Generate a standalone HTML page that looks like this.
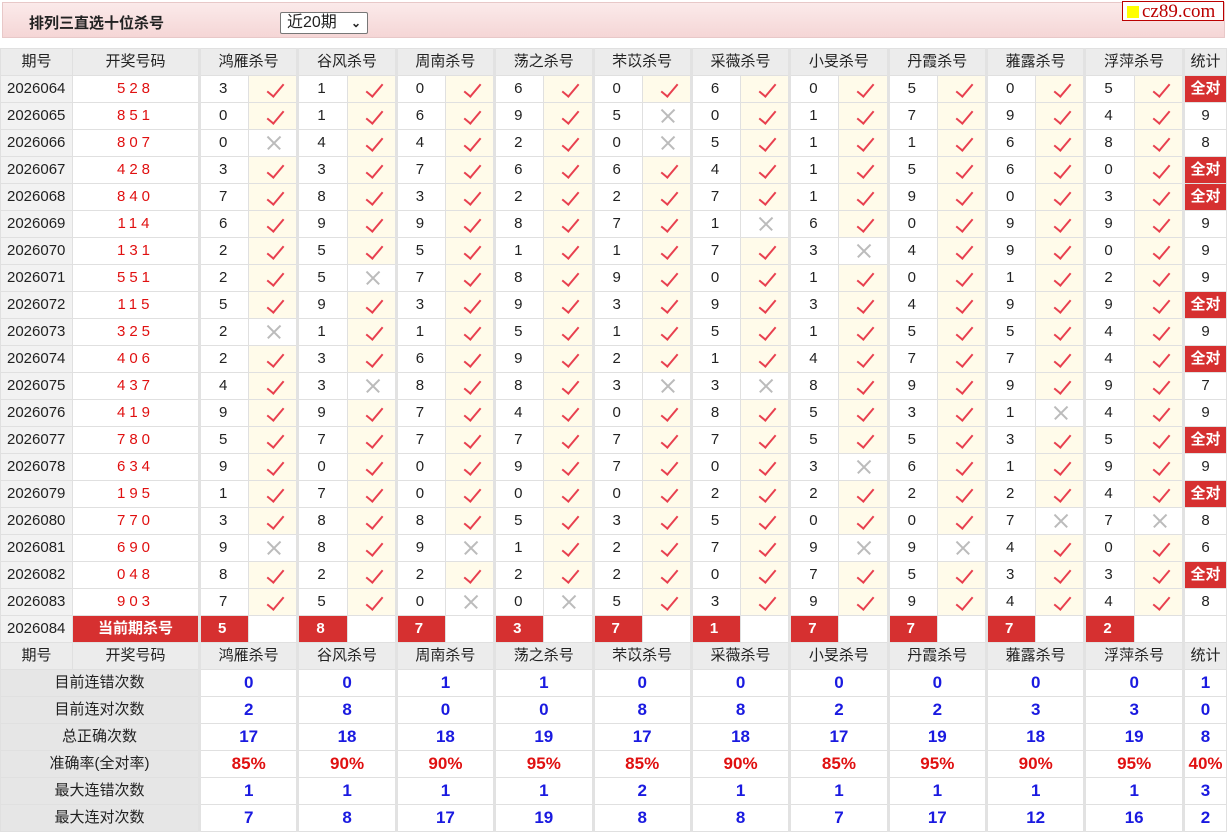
<!DOCTYPE html>
<html><head><meta charset="utf-8">
<style>
body{margin:0;background:#fff;font-family:"Liberation Sans","Noto Sans CJK SC",sans-serif;font-size:15px;color:#222}
.top{position:absolute;left:2px;top:2px;width:1223px;height:36px;background:linear-gradient(#fbeaea,#f5d6d6);border:1px solid #e8c8c8;box-sizing:border-box}
.title{position:absolute;left:26px;top:9px;font-size:15px;font-weight:bold;color:#222}
.sel{position:absolute;left:277px;top:9px;width:88px;height:22px;border:1px solid #777;background:#fff;box-sizing:border-box;font-size:16px;line-height:20px;padding-left:6px;border-radius:2px}
.sel b{position:absolute;right:6px;top:0;font-size:12px}
.logo{position:absolute;left:1122px;top:1px;width:102px;height:20px;border:1px solid #b00;background:#fff;font-family:"Liberation Serif",serif;color:#b00;font-size:19px;line-height:19px;box-sizing:border-box}
.logo i{display:inline-block;width:12px;height:12px;background:#ff0;margin:0 3px 0 4px;vertical-align:-1px}
table{position:absolute;left:0;top:48px;border-collapse:collapse;table-layout:fixed;width:1227px}
td{height:26px;line-height:24px;border:1px solid #e0e0e0;text-align:center;padding:0;white-space:nowrap;overflow:hidden;box-sizing:border-box}
tr{height:27px}
td.g{border-left:3px solid #e2e2e2}
tr.h td{background:#ececec}
td.q{background:#f2f2f2;text-align:left;padding-left:6px}
td.k{color:#e01010;letter-spacing:4px}
td.n{text-align:left;padding-left:18px}
td.y{background:#fffbea;font-size:0;position:relative}
td.y::after{content:"";position:absolute;left:22px;top:4px;width:7px;height:15px;border-right:2px solid #e8404f;border-bottom:2px solid #e8404f;transform:rotate(40deg)}
td.x{font-size:0;position:relative}
td.x::before,td.x::after{content:"";position:absolute;left:16px;top:12px;width:18px;height:1.5px;background:#bbb;transform:rotate(45deg)}
td.x::after{transform:rotate(-45deg)}
td.a{background:#d63030;color:#fff;font-weight:bold}
td.c{background:#d63030;color:#fff;font-weight:bold;text-align:left;padding-left:17px}
td.l{background:#e6e6e6}
td.v{color:#1a1ae0;font-weight:bold;font-size:17px}
td.r{color:#e01010;font-weight:bold;font-size:17px}
</style></head><body>
<div class="top"><div class="title">排列三直选十位杀号</div><div class="sel">近20期<b>&#8964;</b></div></div>
<div class="logo"><i></i>cz89.com</div>
<table>
<colgroup><col style="width:72px"><col style="width:127px"><col span="20"><col style="width:43px"></colgroup>
<tr class="h"><td>期号</td><td>开奖号码</td><td class="g" colspan="2">鸿雁杀号</td><td class="g" colspan="2">谷风杀号</td><td class="g" colspan="2">周南杀号</td><td class="g" colspan="2">荡之杀号</td><td class="g" colspan="2">芣苡杀号</td><td class="g" colspan="2">采薇杀号</td><td class="g" colspan="2">小旻杀号</td><td class="g" colspan="2">丹霞杀号</td><td class="g" colspan="2">蕥露杀号</td><td class="g" colspan="2">浮萍杀号</td><td class="g">统计</td></tr>
<tr><td class="q">2026064</td><td class="k">528</td><td class="g n">3</td><td class="y">✓</td><td class="g n">1</td><td class="y">✓</td><td class="g n">0</td><td class="y">✓</td><td class="g n">6</td><td class="y">✓</td><td class="g n">0</td><td class="y">✓</td><td class="g n">6</td><td class="y">✓</td><td class="g n">0</td><td class="y">✓</td><td class="g n">5</td><td class="y">✓</td><td class="g n">0</td><td class="y">✓</td><td class="g n">5</td><td class="y">✓</td><td class="g a">全对</td></tr>
<tr><td class="q">2026065</td><td class="k">851</td><td class="g n">0</td><td class="y">✓</td><td class="g n">1</td><td class="y">✓</td><td class="g n">6</td><td class="y">✓</td><td class="g n">9</td><td class="y">✓</td><td class="g n">5</td><td class="x">✕</td><td class="g n">0</td><td class="y">✓</td><td class="g n">1</td><td class="y">✓</td><td class="g n">7</td><td class="y">✓</td><td class="g n">9</td><td class="y">✓</td><td class="g n">4</td><td class="y">✓</td><td class="g">9</td></tr>
<tr><td class="q">2026066</td><td class="k">807</td><td class="g n">0</td><td class="x">✕</td><td class="g n">4</td><td class="y">✓</td><td class="g n">4</td><td class="y">✓</td><td class="g n">2</td><td class="y">✓</td><td class="g n">0</td><td class="x">✕</td><td class="g n">5</td><td class="y">✓</td><td class="g n">1</td><td class="y">✓</td><td class="g n">1</td><td class="y">✓</td><td class="g n">6</td><td class="y">✓</td><td class="g n">8</td><td class="y">✓</td><td class="g">8</td></tr>
<tr><td class="q">2026067</td><td class="k">428</td><td class="g n">3</td><td class="y">✓</td><td class="g n">3</td><td class="y">✓</td><td class="g n">7</td><td class="y">✓</td><td class="g n">6</td><td class="y">✓</td><td class="g n">6</td><td class="y">✓</td><td class="g n">4</td><td class="y">✓</td><td class="g n">1</td><td class="y">✓</td><td class="g n">5</td><td class="y">✓</td><td class="g n">6</td><td class="y">✓</td><td class="g n">0</td><td class="y">✓</td><td class="g a">全对</td></tr>
<tr><td class="q">2026068</td><td class="k">840</td><td class="g n">7</td><td class="y">✓</td><td class="g n">8</td><td class="y">✓</td><td class="g n">3</td><td class="y">✓</td><td class="g n">2</td><td class="y">✓</td><td class="g n">2</td><td class="y">✓</td><td class="g n">7</td><td class="y">✓</td><td class="g n">1</td><td class="y">✓</td><td class="g n">9</td><td class="y">✓</td><td class="g n">0</td><td class="y">✓</td><td class="g n">3</td><td class="y">✓</td><td class="g a">全对</td></tr>
<tr><td class="q">2026069</td><td class="k">114</td><td class="g n">6</td><td class="y">✓</td><td class="g n">9</td><td class="y">✓</td><td class="g n">9</td><td class="y">✓</td><td class="g n">8</td><td class="y">✓</td><td class="g n">7</td><td class="y">✓</td><td class="g n">1</td><td class="x">✕</td><td class="g n">6</td><td class="y">✓</td><td class="g n">0</td><td class="y">✓</td><td class="g n">9</td><td class="y">✓</td><td class="g n">9</td><td class="y">✓</td><td class="g">9</td></tr>
<tr><td class="q">2026070</td><td class="k">131</td><td class="g n">2</td><td class="y">✓</td><td class="g n">5</td><td class="y">✓</td><td class="g n">5</td><td class="y">✓</td><td class="g n">1</td><td class="y">✓</td><td class="g n">1</td><td class="y">✓</td><td class="g n">7</td><td class="y">✓</td><td class="g n">3</td><td class="x">✕</td><td class="g n">4</td><td class="y">✓</td><td class="g n">9</td><td class="y">✓</td><td class="g n">0</td><td class="y">✓</td><td class="g">9</td></tr>
<tr><td class="q">2026071</td><td class="k">551</td><td class="g n">2</td><td class="y">✓</td><td class="g n">5</td><td class="x">✕</td><td class="g n">7</td><td class="y">✓</td><td class="g n">8</td><td class="y">✓</td><td class="g n">9</td><td class="y">✓</td><td class="g n">0</td><td class="y">✓</td><td class="g n">1</td><td class="y">✓</td><td class="g n">0</td><td class="y">✓</td><td class="g n">1</td><td class="y">✓</td><td class="g n">2</td><td class="y">✓</td><td class="g">9</td></tr>
<tr><td class="q">2026072</td><td class="k">115</td><td class="g n">5</td><td class="y">✓</td><td class="g n">9</td><td class="y">✓</td><td class="g n">3</td><td class="y">✓</td><td class="g n">9</td><td class="y">✓</td><td class="g n">3</td><td class="y">✓</td><td class="g n">9</td><td class="y">✓</td><td class="g n">3</td><td class="y">✓</td><td class="g n">4</td><td class="y">✓</td><td class="g n">9</td><td class="y">✓</td><td class="g n">9</td><td class="y">✓</td><td class="g a">全对</td></tr>
<tr><td class="q">2026073</td><td class="k">325</td><td class="g n">2</td><td class="x">✕</td><td class="g n">1</td><td class="y">✓</td><td class="g n">1</td><td class="y">✓</td><td class="g n">5</td><td class="y">✓</td><td class="g n">1</td><td class="y">✓</td><td class="g n">5</td><td class="y">✓</td><td class="g n">1</td><td class="y">✓</td><td class="g n">5</td><td class="y">✓</td><td class="g n">5</td><td class="y">✓</td><td class="g n">4</td><td class="y">✓</td><td class="g">9</td></tr>
<tr><td class="q">2026074</td><td class="k">406</td><td class="g n">2</td><td class="y">✓</td><td class="g n">3</td><td class="y">✓</td><td class="g n">6</td><td class="y">✓</td><td class="g n">9</td><td class="y">✓</td><td class="g n">2</td><td class="y">✓</td><td class="g n">1</td><td class="y">✓</td><td class="g n">4</td><td class="y">✓</td><td class="g n">7</td><td class="y">✓</td><td class="g n">7</td><td class="y">✓</td><td class="g n">4</td><td class="y">✓</td><td class="g a">全对</td></tr>
<tr><td class="q">2026075</td><td class="k">437</td><td class="g n">4</td><td class="y">✓</td><td class="g n">3</td><td class="x">✕</td><td class="g n">8</td><td class="y">✓</td><td class="g n">8</td><td class="y">✓</td><td class="g n">3</td><td class="x">✕</td><td class="g n">3</td><td class="x">✕</td><td class="g n">8</td><td class="y">✓</td><td class="g n">9</td><td class="y">✓</td><td class="g n">9</td><td class="y">✓</td><td class="g n">9</td><td class="y">✓</td><td class="g">7</td></tr>
<tr><td class="q">2026076</td><td class="k">419</td><td class="g n">9</td><td class="y">✓</td><td class="g n">9</td><td class="y">✓</td><td class="g n">7</td><td class="y">✓</td><td class="g n">4</td><td class="y">✓</td><td class="g n">0</td><td class="y">✓</td><td class="g n">8</td><td class="y">✓</td><td class="g n">5</td><td class="y">✓</td><td class="g n">3</td><td class="y">✓</td><td class="g n">1</td><td class="x">✕</td><td class="g n">4</td><td class="y">✓</td><td class="g">9</td></tr>
<tr><td class="q">2026077</td><td class="k">780</td><td class="g n">5</td><td class="y">✓</td><td class="g n">7</td><td class="y">✓</td><td class="g n">7</td><td class="y">✓</td><td class="g n">7</td><td class="y">✓</td><td class="g n">7</td><td class="y">✓</td><td class="g n">7</td><td class="y">✓</td><td class="g n">5</td><td class="y">✓</td><td class="g n">5</td><td class="y">✓</td><td class="g n">3</td><td class="y">✓</td><td class="g n">5</td><td class="y">✓</td><td class="g a">全对</td></tr>
<tr><td class="q">2026078</td><td class="k">634</td><td class="g n">9</td><td class="y">✓</td><td class="g n">0</td><td class="y">✓</td><td class="g n">0</td><td class="y">✓</td><td class="g n">9</td><td class="y">✓</td><td class="g n">7</td><td class="y">✓</td><td class="g n">0</td><td class="y">✓</td><td class="g n">3</td><td class="x">✕</td><td class="g n">6</td><td class="y">✓</td><td class="g n">1</td><td class="y">✓</td><td class="g n">9</td><td class="y">✓</td><td class="g">9</td></tr>
<tr><td class="q">2026079</td><td class="k">195</td><td class="g n">1</td><td class="y">✓</td><td class="g n">7</td><td class="y">✓</td><td class="g n">0</td><td class="y">✓</td><td class="g n">0</td><td class="y">✓</td><td class="g n">0</td><td class="y">✓</td><td class="g n">2</td><td class="y">✓</td><td class="g n">2</td><td class="y">✓</td><td class="g n">2</td><td class="y">✓</td><td class="g n">2</td><td class="y">✓</td><td class="g n">4</td><td class="y">✓</td><td class="g a">全对</td></tr>
<tr><td class="q">2026080</td><td class="k">770</td><td class="g n">3</td><td class="y">✓</td><td class="g n">8</td><td class="y">✓</td><td class="g n">8</td><td class="y">✓</td><td class="g n">5</td><td class="y">✓</td><td class="g n">3</td><td class="y">✓</td><td class="g n">5</td><td class="y">✓</td><td class="g n">0</td><td class="y">✓</td><td class="g n">0</td><td class="y">✓</td><td class="g n">7</td><td class="x">✕</td><td class="g n">7</td><td class="x">✕</td><td class="g">8</td></tr>
<tr><td class="q">2026081</td><td class="k">690</td><td class="g n">9</td><td class="x">✕</td><td class="g n">8</td><td class="y">✓</td><td class="g n">9</td><td class="x">✕</td><td class="g n">1</td><td class="y">✓</td><td class="g n">2</td><td class="y">✓</td><td class="g n">7</td><td class="y">✓</td><td class="g n">9</td><td class="x">✕</td><td class="g n">9</td><td class="x">✕</td><td class="g n">4</td><td class="y">✓</td><td class="g n">0</td><td class="y">✓</td><td class="g">6</td></tr>
<tr><td class="q">2026082</td><td class="k">048</td><td class="g n">8</td><td class="y">✓</td><td class="g n">2</td><td class="y">✓</td><td class="g n">2</td><td class="y">✓</td><td class="g n">2</td><td class="y">✓</td><td class="g n">2</td><td class="y">✓</td><td class="g n">0</td><td class="y">✓</td><td class="g n">7</td><td class="y">✓</td><td class="g n">5</td><td class="y">✓</td><td class="g n">3</td><td class="y">✓</td><td class="g n">3</td><td class="y">✓</td><td class="g a">全对</td></tr>
<tr><td class="q">2026083</td><td class="k">903</td><td class="g n">7</td><td class="y">✓</td><td class="g n">5</td><td class="y">✓</td><td class="g n">0</td><td class="x">✕</td><td class="g n">0</td><td class="x">✕</td><td class="g n">5</td><td class="y">✓</td><td class="g n">3</td><td class="y">✓</td><td class="g n">9</td><td class="y">✓</td><td class="g n">9</td><td class="y">✓</td><td class="g n">4</td><td class="y">✓</td><td class="g n">4</td><td class="y">✓</td><td class="g">8</td></tr>
<tr><td class="q">2026084</td><td class="a">当前期杀号</td><td class="g c">5</td><td></td><td class="g c">8</td><td></td><td class="g c">7</td><td></td><td class="g c">3</td><td></td><td class="g c">7</td><td></td><td class="g c">1</td><td></td><td class="g c">7</td><td></td><td class="g c">7</td><td></td><td class="g c">7</td><td></td><td class="g c">2</td><td></td><td class="g"></td></tr>
<tr class="h"><td>期号</td><td>开奖号码</td><td class="g" colspan="2">鸿雁杀号</td><td class="g" colspan="2">谷风杀号</td><td class="g" colspan="2">周南杀号</td><td class="g" colspan="2">荡之杀号</td><td class="g" colspan="2">芣苡杀号</td><td class="g" colspan="2">采薇杀号</td><td class="g" colspan="2">小旻杀号</td><td class="g" colspan="2">丹霞杀号</td><td class="g" colspan="2">蕥露杀号</td><td class="g" colspan="2">浮萍杀号</td><td class="g">统计</td></tr>
<tr><td class="l" colspan="2">目前连错次数</td><td class="g v" colspan="2">0</td><td class="g v" colspan="2">0</td><td class="g v" colspan="2">1</td><td class="g v" colspan="2">1</td><td class="g v" colspan="2">0</td><td class="g v" colspan="2">0</td><td class="g v" colspan="2">0</td><td class="g v" colspan="2">0</td><td class="g v" colspan="2">0</td><td class="g v" colspan="2">0</td><td class="g v">1</td></tr>
<tr><td class="l" colspan="2">目前连对次数</td><td class="g v" colspan="2">2</td><td class="g v" colspan="2">8</td><td class="g v" colspan="2">0</td><td class="g v" colspan="2">0</td><td class="g v" colspan="2">8</td><td class="g v" colspan="2">8</td><td class="g v" colspan="2">2</td><td class="g v" colspan="2">2</td><td class="g v" colspan="2">3</td><td class="g v" colspan="2">3</td><td class="g v">0</td></tr>
<tr><td class="l" colspan="2">总正确次数</td><td class="g v" colspan="2">17</td><td class="g v" colspan="2">18</td><td class="g v" colspan="2">18</td><td class="g v" colspan="2">19</td><td class="g v" colspan="2">17</td><td class="g v" colspan="2">18</td><td class="g v" colspan="2">17</td><td class="g v" colspan="2">19</td><td class="g v" colspan="2">18</td><td class="g v" colspan="2">19</td><td class="g v">8</td></tr>
<tr><td class="l" colspan="2">准确率(全对率)</td><td class="g r" colspan="2">85%</td><td class="g r" colspan="2">90%</td><td class="g r" colspan="2">90%</td><td class="g r" colspan="2">95%</td><td class="g r" colspan="2">85%</td><td class="g r" colspan="2">90%</td><td class="g r" colspan="2">85%</td><td class="g r" colspan="2">95%</td><td class="g r" colspan="2">90%</td><td class="g r" colspan="2">95%</td><td class="g r">40%</td></tr>
<tr><td class="l" colspan="2">最大连错次数</td><td class="g v" colspan="2">1</td><td class="g v" colspan="2">1</td><td class="g v" colspan="2">1</td><td class="g v" colspan="2">1</td><td class="g v" colspan="2">2</td><td class="g v" colspan="2">1</td><td class="g v" colspan="2">1</td><td class="g v" colspan="2">1</td><td class="g v" colspan="2">1</td><td class="g v" colspan="2">1</td><td class="g v">3</td></tr>
<tr><td class="l" colspan="2">最大连对次数</td><td class="g v" colspan="2">7</td><td class="g v" colspan="2">8</td><td class="g v" colspan="2">17</td><td class="g v" colspan="2">19</td><td class="g v" colspan="2">8</td><td class="g v" colspan="2">8</td><td class="g v" colspan="2">7</td><td class="g v" colspan="2">17</td><td class="g v" colspan="2">12</td><td class="g v" colspan="2">16</td><td class="g v">2</td></tr>
</table>
</body></html>
